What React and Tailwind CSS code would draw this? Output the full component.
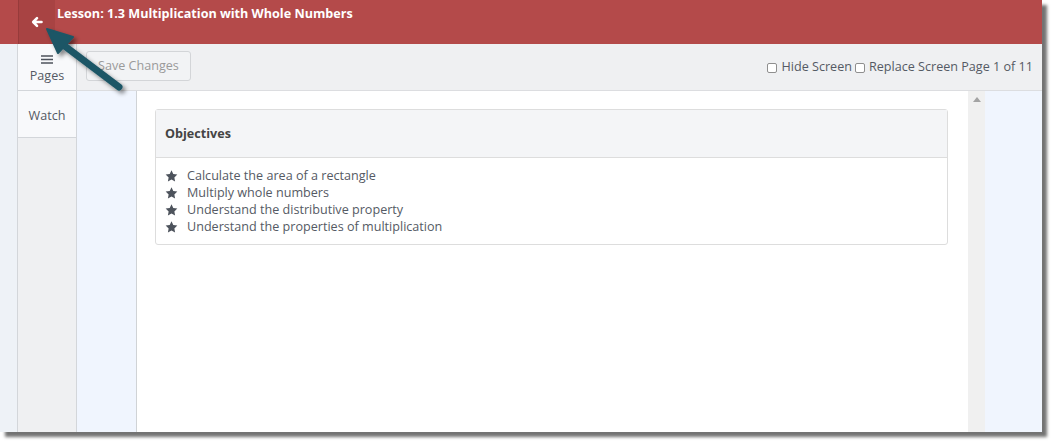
const objectives = [
  'Calculate the area of a rectangle',
  'Multiply whole numbers',
  'Understand the distributive property',
  'Understand the properties of multiplication',
];

function Checkbox() {
  return <span className="inline-block w-[10px] h-[10px] border border-[#8f8f8f] rounded-[2px] bg-white mr-[4px] translate-y-[1px]" />;
}

function StarIcon() {
  return (
    <svg width="13" height="12" viewBox="0 0 24 23" className="mr-[9px] shrink-0">
      <path d="M12 0.5l3.4 7.1 7.8 1.1-5.7 5.5 1.4 7.8L12 18.3 5.1 22l1.4-7.8L0.8 8.7l7.8-1.1z" fill="#4d535c" />
    </svg>
  );
}

export default function App() {
  return (
    <div className="relative w-[1057px] h-[447px] bg-white overflow-hidden" style={{ fontFamily: '"Open Sans", sans-serif' }}>
      <div className="w-[1042px] h-[432px] flex flex-col bg-[#eef2f7] shadow-[5px_5px_3px_rgba(0,0,0,0.55)]">
        {/* header */}
        <div className="h-[44px] flex bg-[#b44a4a] shrink-0">
          <div className="w-[18px]" />
          <div className="w-[37px] bg-[#a84343] border-l border-[#973b3b] flex items-center justify-center">
            <svg width="12" height="12" viewBox="0 0 12 12">
              <path d="M10.5 6H2.5M6 2.2L2.2 6 6 9.8" stroke="white" strokeWidth="2.6" fill="none" strokeLinecap="round" strokeLinejoin="round" />
            </svg>
          </div>
          <div className="pl-[2px] pt-[5px] text-white font-bold text-[12.6px]">Lesson: 1.3 Multiplication with Whole Numbers</div>
        </div>

        <div className="flex flex-1 min-h-0">
          <div className="w-[18px] bg-[#eef2f7] border-r border-[#d3d6da]" />
          {/* nav */}
          <div className="w-[59px] bg-[#eff0f2] border-r border-[#d3d6da] flex flex-col text-[12.6px] text-[#555a64]">
            <div className="h-[47px] bg-[#f8f9fb] border-b border-[#d3d6da] flex flex-col items-center pt-[11px]">
              <svg width="12" height="9" viewBox="0 0 12 9">
                <path d="M0 1h12M0 4.5h12M0 8h12" stroke="#4d535c" strokeWidth="1.6" />
              </svg>
              <span className="leading-[18px] mt-[3px]">Pages</span>
            </div>
            <div className="h-[47px] bg-[#f8f9fb] border-b border-[#d3d6da] flex items-center justify-center pt-[4px]">Watch</div>
          </div>
          {/* main */}
          <div className="flex-1 flex flex-col min-w-0">
            <div className="h-[47px] bg-[#eff0f2] border-b border-[#dcdde0] flex items-center justify-between pl-[9px] pr-[9px] text-[12.6px] text-[#555a64]">
              <div className="h-[30px] px-[11px] border border-[#d3d5d8] rounded-[3px] bg-[#f2f3f5] text-[#9a9a9a] flex items-center -translate-y-[1px]">Save Changes</div>
              <div className="flex items-center">
                <Checkbox />
                <span className="mr-[3px]">Hide Screen</span>
                <Checkbox />
                <span>Replace Screen Page 1 of 11</span>
              </div>
            </div>
            <div className="flex flex-1 min-h-0">
              <div className="w-[60px] bg-[#f0f5fe] border-r border-[#d0d3d6]" />
              <div className="w-[831px] bg-white pt-[18px] px-[18px]">
                <div className="w-[793px] border border-[#dddddd] rounded-[3px]">
                  <div className="h-[48px] bg-[#f4f5f7] border-b border-[#dddddd] flex items-center px-[9px] pt-[2px] text-[12.6px] font-bold text-[#444]">Objectives</div>
                  <ul className="pt-[9px] pb-[9px] px-[9px] text-[12.6px] text-[#555a64] leading-[17px]">
                    {objectives.map((o) => (
                      <li key={o} className="flex items-center">
                        <StarIcon />
                        {o}
                      </li>
                    ))}
                  </ul>
                </div>
              </div>
              <div className="w-[17px] bg-[#f0f0f0] flex justify-center pt-[6px]">
                <svg width="8" height="5" viewBox="0 0 8 5"><path d="M0 5L4 0L8 5Z" fill="#a3a3a3" /></svg>
              </div>
              <div className="flex-1 bg-[#f0f5fe]" />
            </div>
          </div>
        </div>
      </div>

      {/* annotation arrow */}
      <svg className="absolute left-0 top-0 pointer-events-none" width="140" height="100" viewBox="0 0 140 100">
        <defs>
          <filter id="sh" x="-20%" y="-20%" width="150%" height="150%">
            <feDropShadow dx="3" dy="3" stdDeviation="2" floodColor="#000" floodOpacity="0.45" />
          </filter>
        </defs>
        <g filter="url(#sh)">
          <path d="M62 44L119 87" stroke="#1d5666" strokeWidth="7" strokeLinecap="round" />
          <path d="M47 29L73 37L58 53Z" fill="#1d5666" stroke="#1d5666" strokeWidth="2" strokeLinejoin="round" />
        </g>
      </svg>
    </div>
  );
}
